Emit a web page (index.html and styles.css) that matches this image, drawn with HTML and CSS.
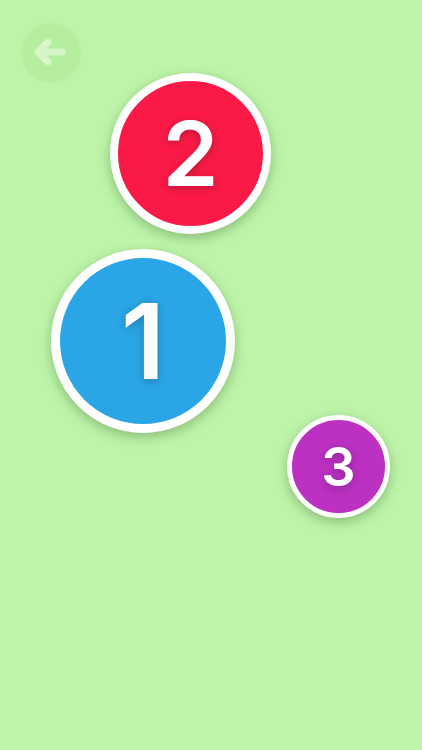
FILE: index.html
```html
<!DOCTYPE html>
<html>
<head>
<meta charset="utf-8">
<link rel="stylesheet" href="styles.css">
</head>
<body>
<div class="canvas">
  <button class="back" aria-label="Back">
    <svg width="32" height="26" viewBox="0 0 32 26">
      <path d="M14 3 L4 13 L14 23 M5 13 L28 13" fill="none" stroke="#e6fadc" stroke-width="7" stroke-linecap="round" stroke-linejoin="round"/>
    </svg>
  </button>
  <div class="bubble red"><span>2</span></div>
  <div class="bubble blue"><span>1</span></div>
  <div class="bubble purple"><span>3</span></div>
</div>
</body>
</html>
```
FILE: styles.css
```css
html, body {
  margin: 0;
  padding: 0;
}
body {
  background: #bdf4a9;
  font-family: Inter, "Liberation Sans", Arial, sans-serif;
}
.canvas {
  position: relative;
  width: 422px;
  height: 750px;
  overflow: hidden;
}
.back {
  position: absolute;
  left: 23px;
  top: 24px;
  width: 56px;
  height: 56px;
  border-radius: 50%;
  border: none;
  background: #b6ee9f;
  box-shadow: 0 1px 4px rgba(60, 120, 40, 0.12);
  display: flex;
  align-items: center;
  justify-content: center;
  padding: 0;
  opacity: 0.9;
}
.back svg {
  opacity: 0.75;
  margin-left: -2px;
}
.bubble {
  position: absolute;
  box-sizing: border-box;
  border-radius: 50%;
  border-style: solid;
  border-color: #fff;
  display: flex;
  align-items: center;
  justify-content: center;
  color: #fff;
  font-weight: 600;
  box-shadow: 0 4px 12px rgba(40, 90, 30, 0.35);
}
.bubble span {
  text-shadow: 0 2px 8px rgba(0, 0, 0, 0.25);
  line-height: 1;
}
.red {
  left: 110px;
  top: 73px;
  width: 161px;
  height: 161px;
  border-width: 8px;
  background: #fb1a47;
  font-size: 90px;
}
.blue {
  left: 51px;
  top: 249px;
  width: 184px;
  height: 184px;
  border-width: 9px;
  background: #2aa5e6;
  font-size: 104px;
}
.purple {
  left: 287px;
  top: 415px;
  width: 103px;
  height: 103px;
  border-width: 5px;
  background: #bc30c2;
  font-size: 54px;
}
```
